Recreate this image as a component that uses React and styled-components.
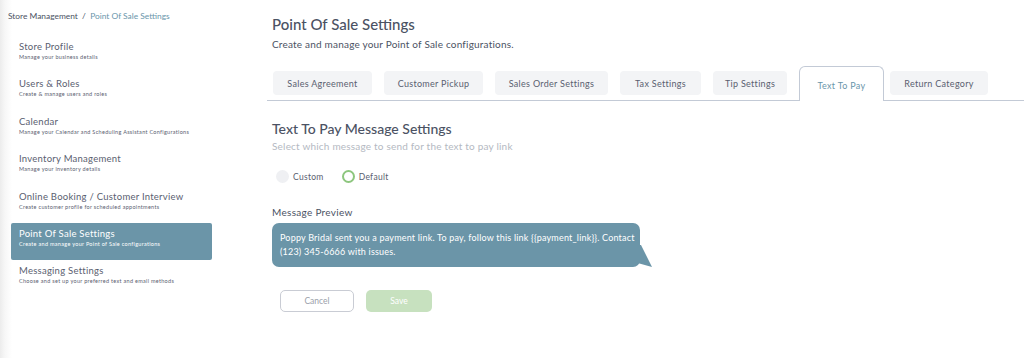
import React, { useState } from 'react'
import styled, { createGlobalStyle } from 'styled-components'


const GlobalStyle = createGlobalStyle`
  html, body {
    margin: 0;
    padding: 0;
    background: #ffffff;
    font-family: Lato, "Open Sans", sans-serif;
    color: #4b5263;
  }
`


const Page = styled.div`
  display: grid;
  grid-template-columns: 267px 1fr;
  width: 1024px;
  height: 358px;
  overflow: hidden;
`


const Sidebar = styled.aside`
  background: linear-gradient(to right, #ececec 0px, #f7f7f7 5px, #ffffff 12px);
  padding-top: 10px;
`


const Breadcrumb = styled.div`
  padding-left: 8px;
  font-size: 8.4px;
  line-height: 12px;
  color: #4b5263;
  height: 26px;

  span {
    color: #6a96ab;
  }
`


const NavList = styled.nav`
  display: flex;
  flex-direction: column;
  padding-left: 11px;
  width: 201px;
`


const NavItem = styled.div`
  height: 37.4px;
  box-sizing: border-box;
  padding: 5px 8px 0;
  border-radius: 2px;
  background: ${props => props.active ? '#6b95a8' : 'transparent'};
  color: ${props => props.active ? '#ffffff' : '#5a6070'};
`


const NavTitle = styled.div`
  font-size: 9.5px;
  font-weight: 400;
  letter-spacing: 0.25px;
  line-height: 11px;
`


const NavSub = styled.div`
  font-size: 5.5px;
  letter-spacing: 0.3px;
  line-height: 9px;
  margin-top: 1px;
`


const Main = styled.main`
  display: flex;
  flex-direction: column;
`


const Header = styled.header`
  padding: 15px 0 0 5px;
`


const Title = styled.h1`
  margin: 0;
  font-size: 15px;
  font-weight: 500;
  line-height: 18px;
  color: #4b5263;
`


const Subtitle = styled.p`
  margin: 5px 0 0;
  font-size: 10px;
  line-height: 12px;
  letter-spacing: 0.2px;
  color: #4b5263;
`


const TabBar = styled.div`
  display: flex;
  align-items: flex-end;
  gap: 12px;
  margin-top: 16px;
  padding-left: 6px;
  border-bottom: 1px solid #c3cad6;
  height: 34px;
`


const Tab = styled.div`
  display: flex;
  align-items: center;
  justify-content: center;
  box-sizing: border-box;
  width: ${props => props.w}px;
  font-size: 9px;
  letter-spacing: 0.3px;
  color: ${props => props.active ? '#6a96ab' : '#5a6070'};
  background: ${props => props.active ? '#ffffff' : '#f3f4f6'};
  height: ${props => props.active ? 35 : 24}px;
  margin-bottom: ${props => props.active ? -1 : 5}px;
  border-radius: ${props => props.active ? '6px 6px 0 0' : '4px'};
  border: ${props => props.active ? '1px solid #c3cad6' : 'none'};
  border-bottom: none;
  padding-top: ${props => props.active ? 2 : 0}px;
  margin-right: ${props => props.tight ? -6 : 0}px;
`


const Section = styled.section`
  padding: 19px 0 0 5px;
  display: flex;
  flex-direction: column;
`


const SectionTitle = styled.h2`
  margin: 0;
  font-size: 14px;
  font-weight: 500;
  line-height: 17px;
  color: #4b5263;
`


const SectionSub = styled.p`
  margin: 3px 0 0;
  font-size: 10px;
  letter-spacing: 0.2px;
  line-height: 12px;
  color: #b4b9c2;
`


const RadioRow = styled.div`
  display: flex;
  gap: 18px;
  margin-top: 18px;
  padding-left: 4px;
`


const RadioOption = styled.label`
  display: flex;
  align-items: center;
  gap: 4px;
  font-size: 8.5px;
  letter-spacing: 0.3px;
  color: #5a6070;
  cursor: pointer;
`


const RadioDot = styled.span`
  width: 13px;
  height: 13px;
  border-radius: 50%;
  box-sizing: border-box;
  background: ${props => props.checked ? '#ffffff' : '#eff0f3'};
  border: ${props => props.checked ? '2.5px solid #8dc67e' : 'none'};
`


const Label = styled.div`
  margin-top: 23px;
  font-size: 10px;
  letter-spacing: 0.3px;
  line-height: 12px;
  color: #4b5263;
`


const BubbleWrap = styled.div`
  position: relative;
  margin-top: 5px;
  width: 368px;
`


const Bubble = styled.div`
  background: #6b95a8;
  color: #ffffff;
  border-radius: 7px;
  padding: 8px 4px 9px 8px;
  font-size: 9px;
  letter-spacing: 0.2px;
  line-height: 13.5px;
`


const Tail = styled.svg`
  position: absolute;
  left: 362px;
  bottom: -2px;
`


const Actions = styled.div`
  display: flex;
  gap: 12px;
  margin-top: 23px;
  padding-left: 8px;
`


const Button = styled.button`
  width: ${props => props.primary ? 66 : 74}px;
  height: 22px;
  border-radius: 5px;
  font-family: inherit;
  font-size: 8.5px;
  border: ${props => props.primary ? 'none' : '1px solid #c9ccd4'};
  background: ${props => props.primary ? '#c7e1bf' : '#ffffff'};
  color: ${props => props.primary ? '#ffffff' : '#9aa0aa'};
  cursor: pointer;
`


const navItems = [
  { title: 'Store Profile', sub: 'Manage your business details' },
  { title: 'Users & Roles', sub: 'Create & manage users and roles' },
  { title: 'Calendar', sub: 'Manage your Calendar and Scheduling Assistant Configurations' },
  { title: 'Inventory Management', sub: 'Manage your inventory details' },
  { title: 'Online Booking / Customer Interview', sub: 'Create customer profile for scheduled appointments' },
  { title: 'Point Of Sale Settings', sub: 'Create and manage your Point of Sale configurations' },
  { title: 'Messaging Settings', sub: 'Choose and set up your preferred text and email methods' },
]

const tabs = [
  { label: 'Sales Agreement', w: 99 },
  { label: 'Customer Pickup', w: 99 },
  { label: 'Sales Order Settings', w: 113 },
  { label: 'Tax Settings', w: 81 },
  { label: 'Tip Settings', w: 74 },
  { label: 'Text To Pay', w: 85 },
  { label: 'Return Category', w: 98 },
]

const previewText = 'Poppy Bridal sent you a payment link. To pay, follow this link {{payment_link}}. Contact (123) 345-6666 with issues.'


const App = () => {
  const [mode, setMode] = useState('default')

  return (
    <React.Fragment>
      <GlobalStyle />
      <Page>
        <Sidebar>
          <Breadcrumb>
            Store Management&nbsp; / &nbsp;<span>Point Of Sale Settings</span>
          </Breadcrumb>
          <NavList>
            {navItems.map(item => (
              <NavItem key={item.title} active={item.title === 'Point Of Sale Settings'}>
                <NavTitle>{item.title}</NavTitle>
                <NavSub>{item.sub}</NavSub>
              </NavItem>
            ))}
          </NavList>
        </Sidebar>

        <Main>
          <Header>
            <Title>Point Of Sale Settings</Title>
            <Subtitle>Create and manage your Point of Sale configurations.</Subtitle>
          </Header>

          <TabBar>
            {tabs.map(t => (
              <Tab key={t.label} w={t.w}
                active={t.label === 'Text To Pay'}
                tight={t.label === 'Text To Pay'}>
                {t.label}
              </Tab>
            ))}
          </TabBar>

          <Section>
            <SectionTitle>Text To Pay Message Settings</SectionTitle>
            <SectionSub>Select which message to send for the text to pay link</SectionSub>

            <RadioRow>
              <RadioOption onClick={() => setMode('custom')}>
                <RadioDot checked={mode === 'custom'} />
                Custom
              </RadioOption>
              <RadioOption onClick={() => setMode('default')}>
                <RadioDot checked={mode === 'default'} />
                Default
              </RadioOption>
            </RadioRow>

            <Label>Message Preview</Label>
            <BubbleWrap>
              <Bubble>{previewText}</Bubble>
              <Tail width="20" height="24" viewBox="0 0 20 24">
                <path d="M0 0 L7 0 L18 22 L0 17 Z" fill="#6b95a8" />
              </Tail>
            </BubbleWrap>

            <Actions>
              <Button>Cancel</Button>
              <Button primary>Save</Button>
            </Actions>
          </Section>
        </Main>
      </Page>
    </React.Fragment>
  )
}

export default App
